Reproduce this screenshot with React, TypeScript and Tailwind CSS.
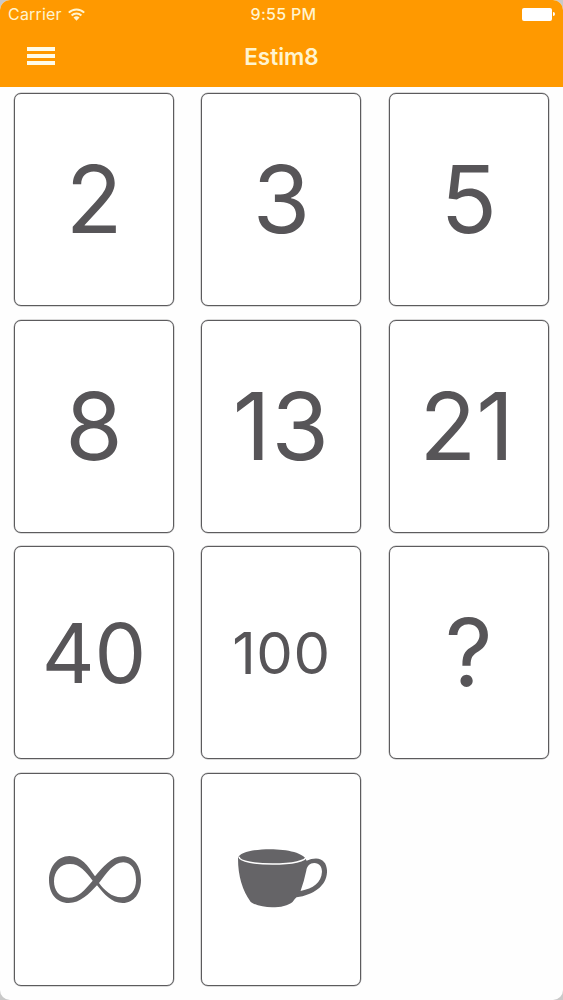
import type { ReactNode } from "react";

function Card({ children }: { children: ReactNode }) {
  return (
    <div className="flex h-[213px] w-[160px] items-center justify-center rounded-[7px] border border-[#5c5b5d] bg-white leading-none text-[#575558] shadow-[0_0_0_0.5px_#b5b5b6]">
      {children}
    </div>
  );
}

function InfinityIcon() {
  return (
    <svg viewBox="27 36 276 141" className="ml-[2px] h-[47px] w-[92px]" fill="#656467" fillRule="evenodd">
      <path d="M88 36C52 36 27 70 27 108C27 148 49 177 86 177C122 177 146 150 171 124C193 150 213 177 248 177C282 177 303 147 303 108C303 68 282 37 248 37C214 37 189 70 165 97C144 66 124 36 88 36ZM90 60C120 60 137 83 158 110C133 139 115 161 86 161C57 161 42 139 42 112C42 82 61 60 90 60ZM250 55C276 55 288 80 288 109C288 139 272 160 245 160C214 160 193 138 177 117C200 87 221 55 250 55Z" />
    </svg>
  );
}

function CupIcon() {
  return (
    <svg viewBox="27 29 266 176" className="ml-[2px] mb-[2px] h-[59px] w-[89px]">
      <path fill="#656467" d="M27 56C34 20 222 18 232 64Q246 57 260 57C283 57 294 75 293 98C291 139 253 166 202 173Q195 179 190 187C166 208 95 209 65 187Q27 136 27 56Z" />
      <path fill="#fff" d="M231 94C233 80 242 71 255 71C270 71 278 82 278 97C276 130 252 147 214 154Q225 124 231 94Z" />
      <path d="M30 52C31 67 82 74 130 74C190 74 231 65 232 50" fill="none" stroke="#fff" strokeWidth="4.5" />
    </svg>
  );
}

function WifiIcon() {
  return (
    <svg viewBox="0 0 17 13" className="ml-[6px] h-[13px] w-[17px]" fill="none" stroke="#fff4cf" strokeWidth="2">
      <path d="M.8 4.6C5 .3 12 .3 16.2 4.6" />
      <path d="M3.6 7.5C6.3 4.8 10.7 4.8 13.4 7.5" />
      <path d="M5.5 9.5Q8.5 7 11.5 9.5L8.5 12.8Z" fill="#fff4cf" stroke="none" />
    </svg>
  );
}

const large = "text-[93px]";

export default function App() {
  return (
    <div className="h-[1000px] w-[563px] overflow-hidden bg-[#c9c9c9] font-['Inter',sans-serif]">
      <div className="flex h-full flex-col overflow-hidden rounded-[10px] bg-[#fefefe]">
        <header className="flex h-[87px] shrink-0 flex-col bg-[#ff9900] text-[#fff4cf]">
          <div className="grid h-[28px] grid-cols-3 items-center px-[8px] text-[16px] leading-none">
            <div className="flex items-center tracking-[0.2px]">
              Carrier
              <WifiIcon />
            </div>
            <div className="pl-[4px] text-center font-medium tracking-[0.3px]">9:55 PM</div>
            <div className="flex items-center justify-end gap-px">
              <div className="h-[13px] w-[30px] rounded-[2px] bg-white" />
              <div className="h-[4px] w-[2px] rounded-r-full bg-white" />
            </div>
          </div>
          <div className="grid h-[58px] grid-cols-3 items-center px-[27px]">
            <button aria-label="Menu" className="flex w-[28px] flex-col gap-[3px] pb-[3px]">
              <span className="h-[4px] w-full bg-[#fffbe8]" />
              <span className="h-[4px] w-full bg-[#fffbe8]" />
              <span className="h-[4px] w-full bg-[#fffbe8]" />
            </button>
            <h1 className="text-center text-[22.5px] font-semibold leading-none">Estim8</h1>
          </div>
        </header>
        <main className="grid grid-cols-[160px_160px_160px] gap-x-[27.4px] gap-y-[13.7px] pl-[14px] pt-[6px]">
          <Card><span className={large}>2</span></Card>
          <Card><span className={large}>3</span></Card>
          <Card><span className={large}>5</span></Card>
          <Card><span className={large}>8</span></Card>
          <Card><span className="text-[93px] tracking-[1px]">13</span></Card>
          <Card><span className="pr-[4px] text-[93px]">21</span></Card>
          <Card><span className="pt-[2px] text-[82px]">40</span></Card>
          <Card><span className="text-[58px] tracking-[0.5px]">100</span></Card>
          <Card><span className={large}>?</span></Card>
          <Card><InfinityIcon /></Card>
          <Card><CupIcon /></Card>
        </main>
      </div>
    </div>
  );
}
